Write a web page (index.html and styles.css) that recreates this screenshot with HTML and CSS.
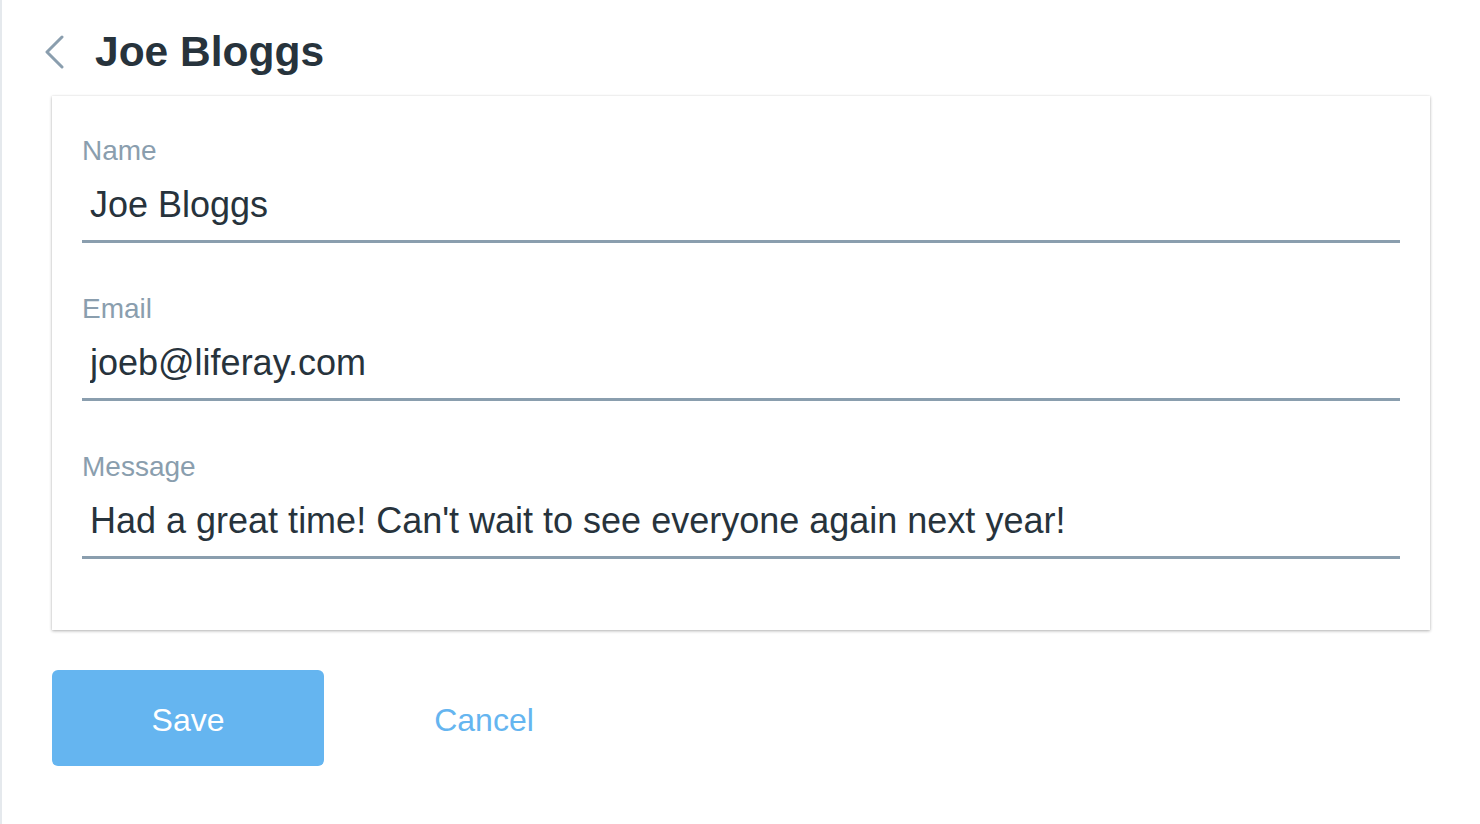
FILE: index.html
```html
<!DOCTYPE html>
<html lang="en">
<head>
<meta charset="utf-8">
<title>Joe Bloggs</title>
<link rel="stylesheet" href="styles.css">
</head>
<body>
<div class="page">
  <header class="header">
    <a class="back" href="#" aria-label="Back">
      <svg width="20" height="34" viewBox="0 0 20 34" fill="none" stroke="#8a9eae" stroke-width="3" stroke-linecap="round" stroke-linejoin="round"><path d="M17 2 L2 17 L17 32"/></svg>
    </a>
    <h1 class="title">Joe Bloggs</h1>
  </header>
  <form class="card">
    <label class="field">
      <span class="label">Name</span>
      <input class="input" type="text" value="Joe Bloggs">
    </label>
    <label class="field">
      <span class="label">Email</span>
      <input class="input" type="text" value="joeb@liferay.com">
    </label>
    <label class="field">
      <span class="label">Message</span>
      <input class="input" type="text" value="Had a great time! Can't wait to see everyone again next year!">
    </label>
  </form>
  <div class="actions">
    <button class="btn btn-primary" type="button">Save</button>
    <button class="btn btn-link" type="button">Cancel</button>
  </div>
</div>
</body>
</html>
```

FILE: styles.css
```css
html, body {
  margin: 0;
  padding: 0;
  background: #ffffff;
}

body {
  font-family: "Liberation Sans", Arial, Helvetica, sans-serif;
  color: #27333c;
}

.page {
  border-left: 2px solid #e5e9ed;
  min-height: 100vh;
  box-sizing: border-box;
  padding: 25px 0 0 50px;
}

.header {
  display: flex;
  align-items: flex-start;
  height: 48px;
  margin-left: -7px;
}

.back {
  display: flex;
  width: 20px;
  height: 34px;
  margin-top: 10px;
}

.title {
  margin: 3px 0 0 30px;
  font-size: 42.5px;
  line-height: 48px;
  font-weight: 700;
  color: #27333c;
}

.card {
  margin: 23px 0 0 0;
  width: 1378px;
  box-sizing: border-box;
  padding: 37px 30px 71px 30px;
  background: #fff;
  box-shadow: 0 1px 3px rgba(0, 0, 0, 0.3), 0 0 1px rgba(0, 0, 0, 0.08);
  display: flex;
  flex-direction: column;
  gap: 48px;
}

.field {
  display: flex;
  flex-direction: column;
}

.label {
  font-size: 28px;
  line-height: 32px;
  margin-top: 2px;
  color: #8a9eae;
}

.input {
  font-family: "Liberation Sans", Arial, Helvetica, sans-serif;
  font-size: 36px;
  line-height: 40px;
  height: 40px;
  color: #27333c;
  border: 0;
  border-bottom: 3px solid #8a9eae;
  padding: 18px 8px 15px 8px;
  margin: 0;
  outline: none;
  background: transparent;
  box-sizing: content-box;
}

.actions {
  display: flex;
  gap: 24px;
  margin-top: 40px;
}

.btn {
  width: 272px;
  height: 96px;
  border: 0;
  border-radius: 6px;
  padding: 4px 0 0 0;
  font-family: "Liberation Sans", Arial, Helvetica, sans-serif;
  font-size: 32px;
  cursor: pointer;
}

.btn-primary {
  background: #65b5f0;
  color: #ffffff;
}

.btn-link {
  background: transparent;
  color: #65b5f0;
}
```
